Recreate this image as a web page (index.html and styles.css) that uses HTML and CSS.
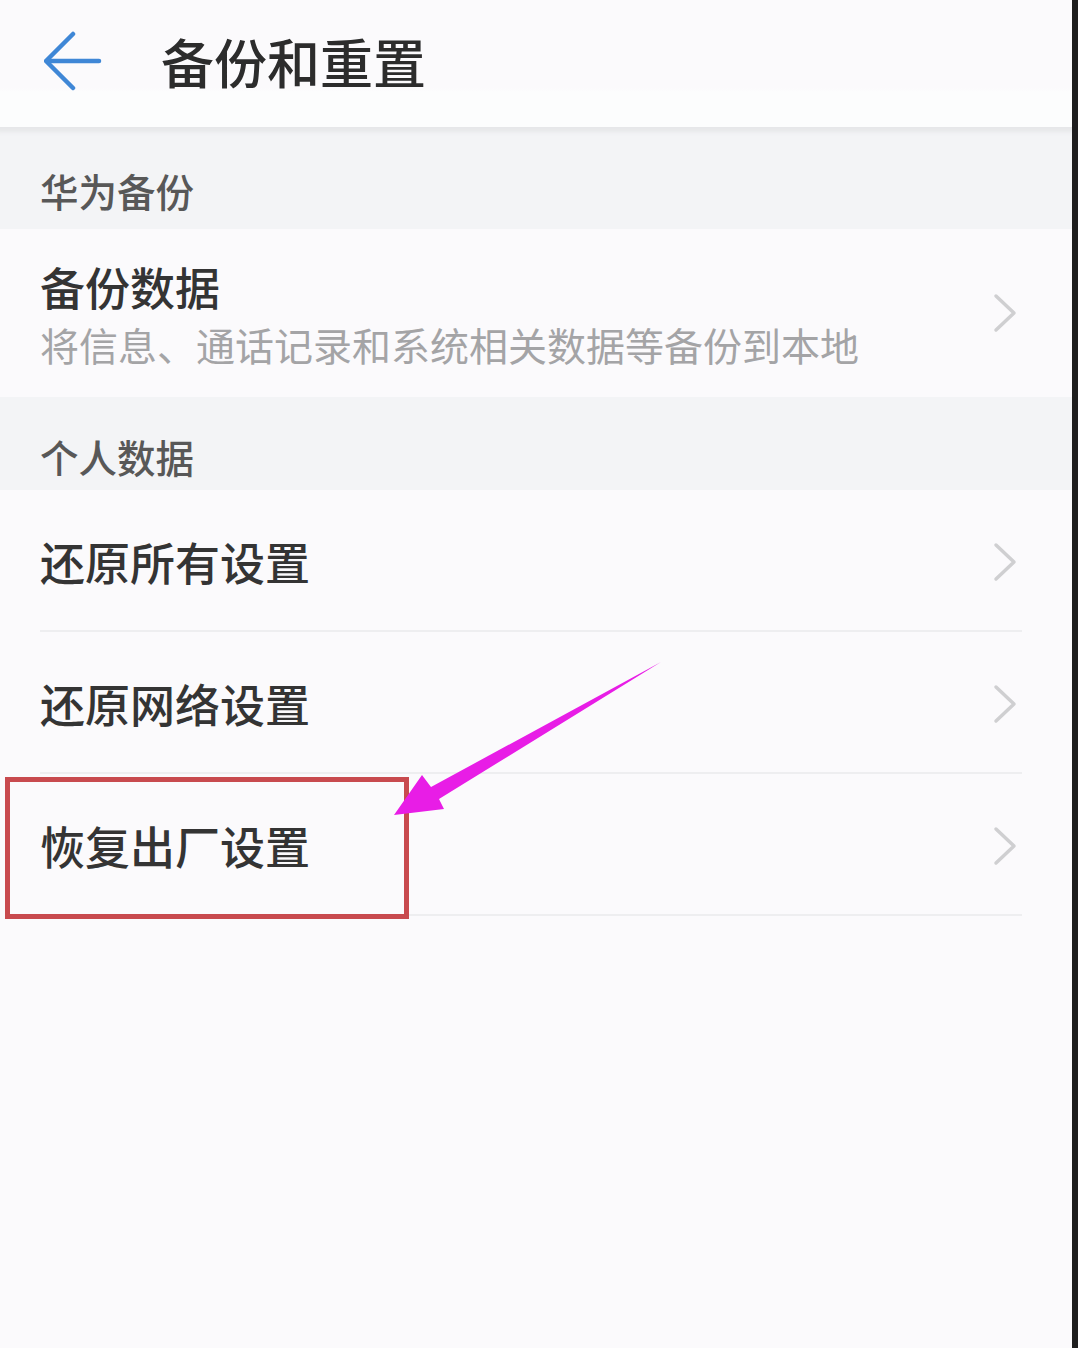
FILE: index.html
```html
<!DOCTYPE html>
<html lang="zh-CN">
<head>
<meta charset="utf-8">
<title>备份和重置</title>
<link rel="stylesheet" href="styles.css">
</head>
<body>
<div class="screen">
  <header class="topbar">
    <svg class="back" width="58" height="60" viewBox="0 0 58 60" aria-hidden="true">
      <polyline points="29,3 2,30 29,57" fill="none" stroke="#3f87d6" stroke-width="4.5" stroke-linecap="round" stroke-linejoin="round"/>
      <line x1="3" y1="30" x2="55" y2="30" stroke="#3f87d6" stroke-width="4.5" stroke-linecap="round"/>
    </svg>
    <h1 class="title">备份和重置</h1>
  </header>

  <div class="section section-first">华为备份</div>
  <div class="row row-tall">
    <div class="row-text">
      <div class="row-title">备份数据</div>
      <div class="row-sub">将信息、通话记录和系统相关数据等备份到本地</div>
    </div>
    <svg class="chev" width="24" height="40" viewBox="0 0 24 40" aria-hidden="true"><polyline points="3,3 21,20 3,37" fill="none" stroke="#cfcfd1" stroke-width="3.5" stroke-linecap="round" stroke-linejoin="round"/></svg>
  </div>

  <div class="section section-second">个人数据</div>
  <div class="list">
    <div class="item">
      <span class="row-title">还原所有设置</span>
      <svg class="chev" width="24" height="40" viewBox="0 0 24 40" aria-hidden="true"><polyline points="3,3 21,20 3,37" fill="none" stroke="#cfcfd1" stroke-width="3.5" stroke-linecap="round" stroke-linejoin="round"/></svg>
    </div>
    <div class="item">
      <span class="row-title">还原网络设置</span>
      <svg class="chev" width="24" height="40" viewBox="0 0 24 40" aria-hidden="true"><polyline points="3,3 21,20 3,37" fill="none" stroke="#cfcfd1" stroke-width="3.5" stroke-linecap="round" stroke-linejoin="round"/></svg>
    </div>
    <div class="item">
      <span class="row-title">恢复出厂设置</span>
      <svg class="chev" width="24" height="40" viewBox="0 0 24 40" aria-hidden="true"><polyline points="3,3 21,20 3,37" fill="none" stroke="#cfcfd1" stroke-width="3.5" stroke-linecap="round" stroke-linejoin="round"/></svg>
    </div>
  </div>

  <div class="highlight-box"></div>
  <svg class="pointer" width="700" height="900" viewBox="0 0 700 900" aria-hidden="true">
    <polygon points="661,662 439,799 444,809 394,815 422,775 431,787" fill="#e81de6"/>
  </svg>
</div>
</body>
</html>
```

FILE: styles.css
```css
* { box-sizing: border-box; }

html, body {
  margin: 0;
  padding: 0;
}

body {
  width: 1078px;
  height: 1348px;
  background: #fbfafc;
  font-family: "Noto Sans CJK SC", "Noto Sans", sans-serif;
  overflow: hidden;
}

.screen {
  position: relative;
  width: 1078px;
  height: 1348px;
  border-right: 6px solid #1e1e1e;
  background: #fbfafc;
}

.topbar {
  height: 127px;
  display: flex;
  align-items: center;
  padding-left: 44px;
  padding-bottom: 5px;
  background: linear-gradient(#fbfafc 0, #fbfafc 88px, #fcfdfd 92px, #fcfdfd 100%);
}

.back {
  display: block;
}

.title {
  margin: 0 0 0 59px;
  font-size: 53px;
  line-height: 60px;
  font-weight: 500;
  color: #2c2c2c;
}

.section {
  background: #f3f4f6;
  font-size: 38.5px;
  line-height: 38px;
  font-weight: 500;
  color: #585858;
  padding-left: 40px;
}

.section-first {
  height: 102px;
  padding-top: 44px;
  box-shadow: inset 0 9px 4px -4px #e6e7e9;
}

.section-second {
  height: 93px;
  padding-top: 40px;
}

.row {
  display: flex;
  align-items: center;
  justify-content: space-between;
  padding: 0 55px 0 40px;
}

.row-tall {
  height: 168px;
}

.row-text {
  display: flex;
  flex-direction: column;
  padding-top: 2px;
}

.row-title {
  font-size: 45px;
  line-height: 44px;
  font-weight: 500;
  color: #343434;
}

.row-sub {
  margin-top: 15px;
  font-size: 39px;
  line-height: 40px;
  color: #a4a4a6;
  white-space: nowrap;
}

.chev {
  display: block;
  flex: none;
}

.list {
  display: flex;
  flex-direction: column;
}

.item {
  height: 142px;
  margin: 0 50px 0 40px;
  padding: 4px 5px 0 0;
  display: flex;
  align-items: center;
  justify-content: space-between;
  border-bottom: 2px solid #eeeef0;
}

.highlight-box {
  position: absolute;
  left: 5px;
  top: 777px;
  width: 404px;
  height: 142px;
  border: 5px solid #c84a4e;
}

.pointer {
  position: absolute;
  left: 0;
  top: 0;
  pointer-events: none;
}
```
